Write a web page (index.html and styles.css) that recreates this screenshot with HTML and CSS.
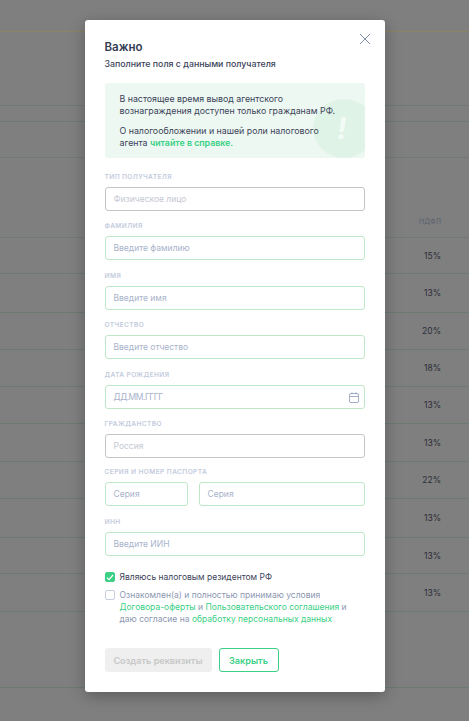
FILE: index.html
```html
<!DOCTYPE html>
<html lang="ru">
<head>
<meta charset="utf-8">
<title>Важно</title>
<link rel="stylesheet" href="styles.css">
</head>
<body>
<div class="page">
  <div class="rule gold h31"></div>
  <div class="rule h74"></div>
  <div class="rule green h16"></div>
  <div class="rule h36"></div>
  <div class="head h80">НДФЛ</div>
  <div class="row h36">15%</div>
  <div class="row h39">13%</div>
  <div class="row h37">20%</div>
  <div class="row h37">18%</div>
  <div class="row h37">13%</div>
  <div class="row h38">13%</div>
  <div class="row h37">22%</div>
  <div class="row h39">13%</div>
  <div class="row h36">13%</div>
  <div class="row h38">13%</div>
  <div class="rule green h76"></div>
</div>
<div class="overlay">
  <section class="modal">
    <svg class="close" width="12" height="12" viewBox="0 0 12 12"><path d="M1 1l10 10M11 1L1 11"/></svg>
    <h1 class="title">Важно</h1>
    <p class="subtitle">Заполните поля с данными получателя</p>
    <div class="notice">
      <div class="notice-mark"><span class="bang">!</span></div>
      <p class="notice-text">В настоящее время вывод агентского вознаграждения доступен только гражданам РФ.</p>
      <p class="notice-text">О налогообложении и нашей роли налогового агента <a class="strong-link">читайте в справке.</a></p>
    </div>
    <div class="field f1"><div class="label">ТИП ПОЛУЧАТЕЛЯ</div><div class="input gray"><span class="muted">Физическое лицо</span></div></div>
    <div class="field f2"><div class="label">ФАМИЛИЯ</div><div class="input"><span>Введите фамилию</span></div></div>
    <div class="field f3"><div class="label">ИМЯ</div><div class="input"><span>Введите имя</span></div></div>
    <div class="field f3"><div class="label">ОТЧЕСТВО</div><div class="input"><span>Введите отчество</span></div></div>
    <div class="field f4"><div class="label">ДАТА РОЖДЕНИЯ</div><div class="input">
      <span class="date">ДД.ММ.ГГГГ</span>
      <svg class="cal" width="10" height="11" viewBox="0 0 10 11"><rect x=".5" y="1.5" width="9" height="9" rx="1.5"/><path d="M.5 4.5h9M3 .3v2M7 .3v2"/></svg>
    </div></div>
    <div class="field f5"><div class="label">ГРАЖДАНСТВО</div><div class="input gray"><span class="muted">Россия</span></div></div>
    <div class="field f5"><div class="label">СЕРИЯ И НОМЕР ПАСПОРТА</div>
      <div class="pair">
        <div class="input short"><span>Серия</span></div>
        <div class="input grow"><span>Серия</span></div>
      </div>
    </div>
    <div class="field f3"><div class="label">ИНН</div><div class="input"><span>Введите ИИН</span></div></div>
    <div class="check first">
      <span class="box on"><svg width="8" height="7" viewBox="0 0 8 7"><path d="M1 3.6l2 2L7 1"/></svg></span>
      <span class="check-dark">Являюсь налоговым резидентом РФ</span>
    </div>
    <div class="check second">
      <span class="box"></span>
      <span class="check-text">Ознакомлен(а) и полностью принимаю условия <a>Договора-оферты</a> и <a>Пользовательского соглашения</a> и даю согласие на <a>обработку персональных данных</a></span>
    </div>
    <div class="actions">
      <button class="btn disabled" type="button">Создать реквизиты</button>
      <button class="btn outline" type="button">Закрыть</button>
    </div>
  </section>
</div>
</body>
</html>
```
FILE: styles.css
```css
* { box-sizing: border-box; }
html, body { margin: 0; padding: 0; }
body {
  width: 469px;
  height: 721px;
  overflow: hidden;
  position: relative;
  background: #7f7f7f;
  font-family: "Inter", "Noto Sans", sans-serif;
  color: #2e3650;
}
.page { width: 469px; }
.rule, .row, .head { border-bottom: 1px solid #6f7a78; }
.rule.gold { border-color: #8a8460; }
.rule.green, .row { border-color: #6c7b70; }
.h31 { height: 32px; }
.h74 { height: 74px; }
.h16 { height: 16px; }
.h36 { height: 36px; }
.h80 { height: 80px; }
.h39 { height: 39px; }
.h37 { height: 37px; }
.h38 { height: 38px; }
.h76 { height: 76px; }
.head, .row {
  display: flex;
  justify-content: flex-end;
  padding-right: 28px;
  font-size: 8px;
}
.head {
  align-items: flex-end;
  padding-bottom: 11px;
  color: #5a6070;
  font-size: 7px;
}
.row { align-items: center; color: #2b2d38; font-size: 8.5px; }
.overlay {
  position: absolute;
  inset: 0;
  display: flex;
  justify-content: center;
  align-items: flex-start;
  padding-top: 20px;
}
.modal {
  position: relative;
  width: 300px;
  height: 672px;
  padding: 20px;
  background: #fff;
  border-radius: 3px;
  box-shadow: 0 4px 16px rgba(0,0,0,.28);
}
.close { position: absolute; top: 13px; right: 14px; }
.close path { stroke: #8190ad; stroke-width: 1; fill: none; }
.title {
  margin: 0;
  font-size: 11.5px;
  line-height: 14px;
  font-weight: 600;
  color: #343c54;
}
.subtitle {
  margin: 4px 0 0;
  font-size: 8.8px;
  line-height: 12px;
  font-weight: 500;
  color: #3c4359;
}
.notice {
  position: relative;
  overflow: hidden;
  margin-top: 13px;
  height: 75px;
  padding: 10px 15px 0;
  background: #edf8f2;
  border-radius: 3px;
}
.notice-mark {
  position: absolute;
  left: 208px;
  top: 16px;
  width: 62px;
  height: 59px;
  border-radius: 50%;
  background: #dff3e7;
}
.bang {
  position: absolute;
  left: 24px;
  top: 11px;
  font-size: 30px;
  line-height: 36px;
  font-weight: 700;
  color: #f3fbf6;
  transform: skewX(-8deg);
}
.notice-text {
  position: relative;
  max-width: 222px;
  margin: 0 0 7px;
  font-size: 8.8px;
  line-height: 12.4px;
  color: #3c4359;
}
.strong-link { color: #3ad085; font-weight: 600; }
.field { display: block; }
.f1 { margin-top: 14px; }
.f2 { margin-top: 10px; }
.f3 { margin-top: 10.5px; }
.f4 { margin-top: 11px; }
.f5 { margin-top: 9.5px; }
.label {
  height: 10px;
  margin-bottom: 5px;
  font-size: 6.6px;
  line-height: 11px;
  font-weight: 600;
  letter-spacing: .4px;
  color: #c3cbdd;
}
.input {
  display: flex;
  align-items: center;
  justify-content: space-between;
  height: 24px;
  padding: 0 8px;
  background: #fff;
  border: 1px solid #bfe8c8;
  border-radius: 3px;
  font-size: 8.5px;
  color: #a8b3cb;
}
.input.gray { border-color: #c4c4c4; }
.muted { color: #c4c8d2; }
.date { letter-spacing: -.5px; }
.cal { margin-right: -3px; }
.cal rect, .cal path { fill: none; stroke: #9aa6be; stroke-width: .9; }
.pair { display: flex; gap: 11px; }
.short { width: 83px; flex: none; }
.grow { flex: 1; }
.check { display: flex; gap: 5px; font-size: 8.5px; line-height: 12px; }
.first { margin-top: 15.5px; align-items: center; }
.second { margin-top: 6px; }
.box {
  flex: none;
  width: 10px;
  height: 10px;
  margin-top: 1px;
  display: flex;
  align-items: center;
  justify-content: center;
  border: 1px solid #c7cedd;
  border-radius: 2px;
  background: #fff;
}
.box.on { background: #3ccf86; border-color: #3ccf86; margin-top: 0; }
.box path { fill: none; stroke: #fff; stroke-width: 1.2; }
.check-dark { color: #3c4359; }
.check-text { color: #8c97b1; }
.check-text a { color: #3ad085; }
.actions { display: flex; gap: 7px; margin-top: 23px; }
.btn {
  height: 24px;
  border-radius: 3px;
  font-family: inherit;
  font-size: 9.1px;
  font-weight: 600;
  padding: 0;
}
.disabled { width: 107px; border: 0; background: #efefef; color: #c8c8c8; }
.outline { width: 60px; border: 1px solid #3ccf86; background: #fff; color: #3ad085; }
```
